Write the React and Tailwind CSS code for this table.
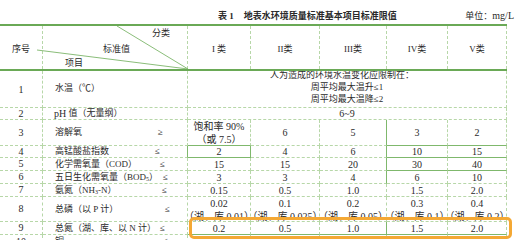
const GRID = "grid grid-cols-[43px_145px_63px_69px_67px_61px_59px]";
const LINE = "border-r border-b border-dashed border-[#b7d7a8]";
const SB = "[border-bottom-style:solid] border-b-[#7fb86c]";
const SR = "[border-right-style:solid] border-r-[#7fb86c]";

function Row({ h, n, name, sym, symPad = "pl-[5px]", vals = [], vc = [], lead = "justify-center leading-[11px]", itemCls = "" }) {
  return (
    <div className={`${GRID} ${h}`}>
      <div className={`${LINE} flex items-center justify-center overflow-hidden text-[10px] leading-none`}>{n}</div>
      <div className={`${LINE} ${itemCls} grid grid-cols-[112px_1fr] items-center overflow-hidden leading-[11px]`}>
        <span className="whitespace-nowrap pl-[12px]">{name}</span>
        <span className={symPad}>{sym}</span>
      </div>
      {vals.map((v, i) => (
        <div key={i} className={`${LINE} ${vc[i] || ""} ${lead} flex flex-col items-center overflow-hidden whitespace-nowrap text-[10px]`}>
          {Array.isArray(v) ? v.map((t) => <span key={t}>{t}</span>) : v}
        </div>
      ))}
    </div>
  );
}

export default function App() {
  return (
    <div className="relative h-[240px] w-[522px] overflow-hidden bg-white font-['Liberation_Serif','Noto_Sans_CJK_SC',serif] text-[9px] text-[#2a2a2a]">
      <div className="flex h-[24px] items-end pb-[2px] leading-[12px]">
        <span className="ml-[218px] font-bold">表 1</span>
        <span className="ml-[10px] font-bold">地表水环境质量标准基本项目标准限值</span>
        <span className="ml-auto mr-[8px]">
          单位：<span className="text-[10px]">mg/L</span>
        </span>
      </div>

      <div className="w-[507px] border-t-2 border-[#6aa956]">
        {/* header */}
        <div className={`${GRID} relative h-[45px] border-b-2 border-[#6aa956]`}>
          <div className="flex items-center justify-center border-r border-dashed border-[#b7d7a8] pt-[5px]">序号</div>
          <div className="relative border-r border-dashed border-[#b7d7a8]">
            <span className="absolute left-[109px] top-[1px] leading-[12px]">分类</span>
            <span className="absolute left-[60px] top-[17px] leading-[12px]">标准值</span>
            <span className="absolute left-[22px] top-[31px] leading-[12px]">项目</span>
          </div>
          {["I 类", "II类", "III类", "IV类", "V类"].map((t) => (
            <div key={t} className="flex items-center justify-center border-r border-dashed border-[#b7d7a8] pt-[5px]">
              {t}
            </div>
          ))}
          <svg className="pointer-events-none absolute left-0 top-0" width="188" height="43" viewBox="0 0 188 43">
            <line x1="37" y1="24" x2="188" y2="43" stroke="#7db66a" strokeWidth="0.9" />
            <line x1="117" y1="0" x2="188" y2="43" stroke="#7db66a" strokeWidth="0.9" />
          </svg>
        </div>

        {/* row 1 */}
        <div className={`${GRID} h-[37px]`}>
          <div className={`${LINE} flex items-center justify-center text-[10px]`}>1</div>
          <div className={`${LINE} flex items-center pl-[12px]`}>水温（℃）</div>
          <div className={`${LINE} col-span-5 overflow-hidden`}>
            <div className="-mt-[2px] flex flex-col items-center leading-[12px]">
              <span className="pr-[10px]">人为造成的环境水温变化应限制在：</span>
              <span>周平均最大温升≤1</span>
              <span>周平均最大温降≤2</span>
            </div>
          </div>
        </div>

        {/* row 2 */}
        <div className={`${GRID} h-[12px]`}>
          <div className={`${LINE} flex items-center justify-center text-[10px] leading-none`}>2</div>
          <div className={`${LINE} flex items-center pl-[11px] leading-none`}>
            <span className="text-[10px]">pH</span>&nbsp;值（无量纲）
          </div>
          <div className={`${LINE} col-span-5 flex items-center justify-center text-[10px] leading-none`}>6~9</div>
        </div>

        <Row
          h="h-[26px]"
          n="3"
          name="溶解氧"
          sym="≥"
          symPad="pl-[3px]"
          lead="justify-center leading-[13px]"
          vals={[["饱和率 90%", "（或 7.5）"], "6", "5", "3", "2"]}
          vc={[SB, "", SR, SB, SB]}
        />
        <Row
          h="h-[12px]"
          n="4"
          name="高锰酸盐指数"
          sym="≤"
          symPad="pl-[0px]"
          itemCls={SR}
          vals={["2", "4", "6", "10", "15"]}
          vc={[`${SB} ${SR}`, "", SR, SB, SB]}
        />
        <Row
          h="h-[13px]"
          n="5"
          name="化学需氧量（COD）"
          sym="≤"
          vals={["15", "15", "20", "30", "40"]}
          vc={["", "", SR, SB, SB]}
        />
        <Row
          h="h-[13px]"
          n="6"
          name={
            <>
              五日生化需氧量（BOD<sub className="text-[6px]">5</sub>）
            </>
          }
          sym="≤"
          symPad="pl-[8px]"
          vals={["3", "3", "4", "6", "10"]}
          vc={["", "", SR, "", ""]}
        />
        <Row
          h="h-[13px]"
          n="7"
          name={
            <>
              氨氮（NH<sub className="text-[6px]">3</sub>-N）
            </>
          }
          sym="≤"
          symPad="pl-[7px]"
          vals={["0.15", "0.5", "1.0", "1.5", "2.0"]}
        />
        <Row
          h="h-[25px]"
          n="8"
          name="总磷（以 P 计）"
          sym="≤"
          symPad="pl-[10px]"
          lead="justify-start leading-[13px]"
          vals={[
            ["0.02", "（湖、库 0.01）"],
            ["0.1", "（湖、库 0.025）"],
            ["0.2", "（湖、库 0.05）"],
            ["0.3", "（湖、库 0.1）"],
            ["0.4", "（湖、库 0.2）"],
          ]}
        />
        <Row
          h="h-[13px]"
          n="9"
          name="总氮（湖、库、以 N 计）"
          sym="≤"
          vals={["0.2", "0.5", "1.0", "1.5", "2.0"]}
          vc={[SB, SB, `${SB} ${SR}`, SB, SB]}
        />
        <Row h="h-[14px]" n="10" name="铜" sym="≤" symPad="pl-[8px]" vals={["", "", "", "", ""]} />
      </div>

      <div className="pointer-events-none absolute left-[189px] top-[217px] h-[22px] w-[323px] rounded-[5px] border-[3px] border-[#f4a834]" />
    </div>
  );
}
